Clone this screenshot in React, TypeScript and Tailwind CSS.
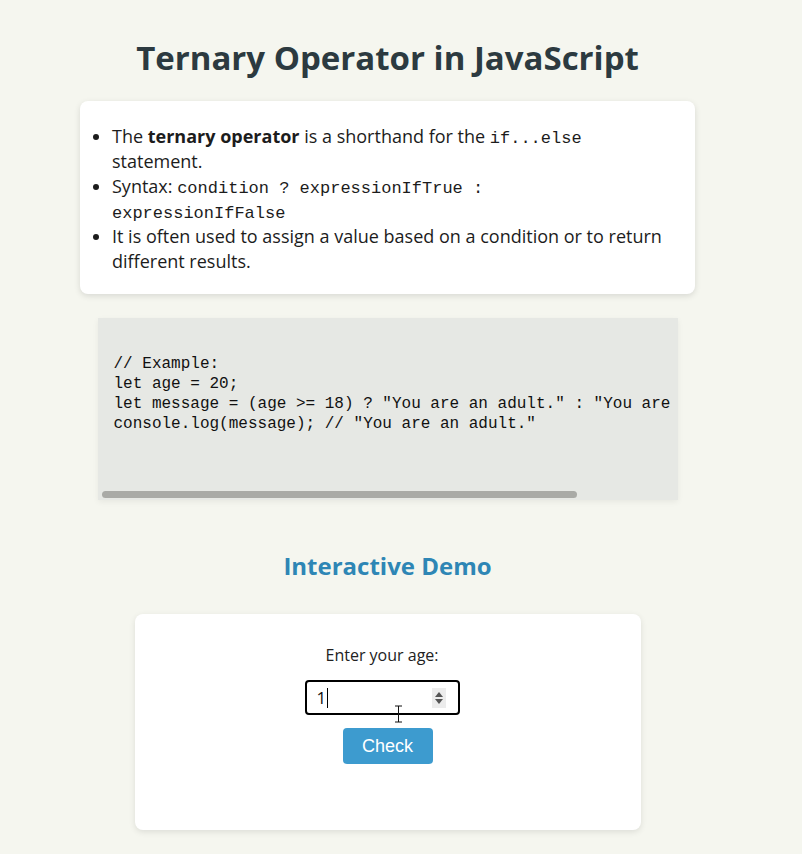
import React from 'react';

const BODY_FONT = { fontFamily: '"Open Sans", "Noto Sans", sans-serif' };
const MONO_FONT = { fontFamily: '"Liberation Mono", "DejaVu Sans Mono", monospace' };

const CODE_LINES = [
  '// Example:',
  'let age = 20;',
  'let message = (age >= 18) ? "You are an adult." : "You are',
  'console.log(message); // "You are an adult."',
];

function Code({ children }: { children: React.ReactNode }) {
  return (
    <code className="text-[17px] leading-[0]" style={MONO_FONT}>
      {children}
    </code>
  );
}

export default function App() {
  return (
    <div className="min-h-screen bg-[#f5f6ef] text-[#1c1c1c]" style={BODY_FONT}>
      <div className="ml-[80px] w-[615px] pt-[38px] pb-[24px]">
        <h1 className="text-center text-[33px] leading-[40px] font-bold text-[#2c3a40]">
          Ternary Operator in JavaScript
        </h1>

        {/* intro card */}
        <div className="mt-[23px] rounded-[8px] bg-white pt-[23px] pb-[20px] pl-[32px] pr-[20px] shadow-[0_2px_6px_rgba(0,0,0,0.12)]">
          <ul className="list-disc text-[18px] leading-[25px] whitespace-nowrap">
            <li>
              The <strong>ternary operator</strong> is a shorthand for the <Code>if...else</Code>
              <br />
              statement.
            </li>
            <li>
              Syntax: <Code>condition ? expressionIfTrue :</Code>
              <br />
              <Code>expressionIfFalse</Code>
            </li>
            <li>
              It is often used to assign a value based on a condition or to return
              <br />
              different results.
            </li>
          </ul>
        </div>

        {/* code sample */}
        <div className="mx-auto mt-[24px] flex h-[182px] w-[580px] flex-col overflow-hidden bg-[#e6e8e4] shadow-[0_2px_6px_rgba(0,0,0,0.06)]">
          <pre className="flex-1 pt-[36px] pl-[16px] text-[16px] leading-[20px] text-[#111]" style={MONO_FONT}>
            {CODE_LINES.join('\n')}
          </pre>
          <div className="mb-[2px] ml-[4px] h-[7px] w-[475px] rounded-full bg-[#a9aaa6]" />
        </div>

        <h2 className="mt-[50px] text-center text-[24px] leading-[32px] font-bold text-[#2e86b5]">
          Interactive Demo
        </h2>

        {/* demo card */}
        <div className="mx-auto mt-[32px] flex h-[216px] w-[506px] flex-col items-center rounded-[8px] bg-white pt-[30px] shadow-[0_2px_6px_rgba(0,0,0,0.1)]">
          <label className="mr-[11px] text-[16px] leading-[22px] text-[#222]">Enter your age:</label>
          <div className="relative mt-[14px] mr-[11px] flex h-[35px] w-[155px] items-center rounded-[4px] border-2 border-black bg-white pl-[10px] pr-[12px]">
            <span className="text-[17px] text-[#111]">1</span>
            <span className="ml-[1px] h-[20px] w-[1px] bg-black" />
            <span className="ml-auto flex h-[20px] w-[14px] flex-col items-center justify-center gap-[2px] bg-[#ececec]">
              <svg width="8" height="5" viewBox="0 0 8 5"><path d="M0 5L4 0L8 5Z" fill="#555" /></svg>
              <svg width="8" height="5" viewBox="0 0 8 5"><path d="M0 0L4 5L8 0Z" fill="#555" /></svg>
            </span>
            <svg className="absolute left-[87px] top-[23px]" width="9" height="18" viewBox="0 0 9 18">
              <path d="M1 1H8M4.5 1V17M1 17H8" stroke="#111" strokeWidth="1" fill="none" />
            </svg>
          </div>
          <button
            className="mt-[13px] h-[36px] w-[90px] rounded-[4px] bg-[#3d9bcf] text-[18px] text-white"
            style={{ fontFamily: '"Liberation Sans", Arial, sans-serif' }}
          >
            Check
          </button>
        </div>
      </div>
    </div>
  );
}
